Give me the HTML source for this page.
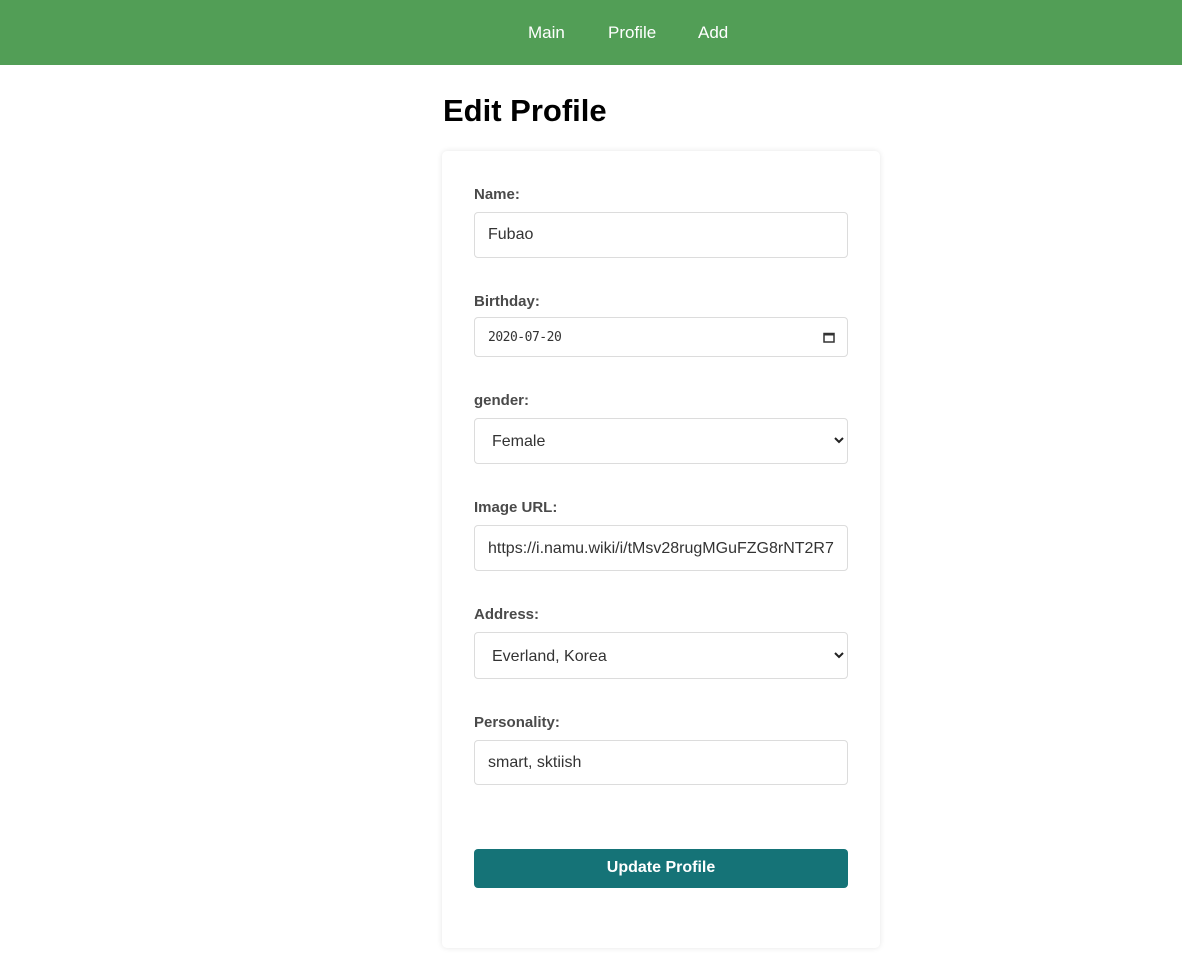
<!DOCTYPE html>
<html><head><style>
body{margin:0;width:1182px;height:968px;background:#fff;font-family:"Liberation Sans",sans-serif;position:relative;overflow:hidden}
nav{position:absolute;left:0;top:0;width:1182px;height:65px;background:#529e56}
nav a{position:absolute;top:23px;color:#fff;font-size:17px;text-decoration:none;line-height:20px}
h1{position:absolute;left:443px;top:93px;margin:0;font-size:31px;font-weight:bold;color:#000;line-height:36px}
.card{position:absolute;left:442px;top:151px;width:438px;height:797px;border-radius:5px;box-shadow:0 0 6px rgba(0,0,0,.1);background:#fff}
.l{position:absolute;left:474px;font-size:15px;font-weight:bold;color:#4a4a4a;line-height:18px}
.f{position:absolute;left:474px;width:372px;border:1px solid #dcdcdc;border-radius:4px;background:#fff;font-size:16px;color:#333;box-sizing:content-box}
.f span{position:absolute;left:13px}
.arrow{position:absolute;right:4px;top:50%;margin-top:-4px}
.btn{position:absolute;left:474px;top:849px;width:374px;height:39px;background:#157377;border-radius:4px;color:#fff;font-weight:bold;font-size:16px;text-align:center;line-height:38px}
</style></head><body>
<nav><a style="left:528px">Main</a><a style="left:608px">Profile</a><a style="left:698px">Add</a></nav>
<h1>Edit Profile</h1>
<div class="card"></div>
<div class="l" style="top:186px">Name:</div>
<div class="f" style="top:212px;height:44px"><span style="top:13px">Fubao</span></div>
<div class="l" style="top:293px">Birthday:</div>
<div class="f" style="top:317px;height:38px"><span style="top:12px;font-size:13px;font-family:'DejaVu Sans Mono',monospace;letter-spacing:-0.5px">2020-07-20</span>
<svg style="position:absolute;right:12px;top:14px" width="12" height="11"><rect x="1" y="1.5" width="10" height="8.5" fill="none" stroke="#333" stroke-width="1.5"/><rect x="1" y="1" width="10" height="2.5" fill="#333"/></svg></div>
<div class="l" style="top:392px">gender:</div>
<div class="f" style="top:418px;height:44px"><span style="top:14px;left:17px">Female</span>
<svg class="arrow" style="right:3px" width="10" height="7"><path d="M1 1L5 5L9 1" fill="none" stroke="#222" stroke-width="2"/></svg></div>
<div class="l" style="top:499px">Image URL:</div>
<div class="f" style="top:525px;height:44px;overflow:hidden"><span style="top:14px;white-space:nowrap">https://i.namu.wiki/i/tMsv28rugMGuFZG8rNT2R7</span></div>
<div class="l" style="top:606px">Address:</div>
<div class="f" style="top:632px;height:45px"><span style="top:15px;left:17px">Everland, Korea</span>
<svg class="arrow" style="right:3px" width="10" height="7"><path d="M1 1L5 5L9 1" fill="none" stroke="#222" stroke-width="2"/></svg></div>
<div class="l" style="top:714px">Personality:</div>
<div class="f" style="top:740px;height:43px"><span style="top:13px">smart, sktiish</span></div>
<div class="btn">Update Profile</div>
</body></html>
